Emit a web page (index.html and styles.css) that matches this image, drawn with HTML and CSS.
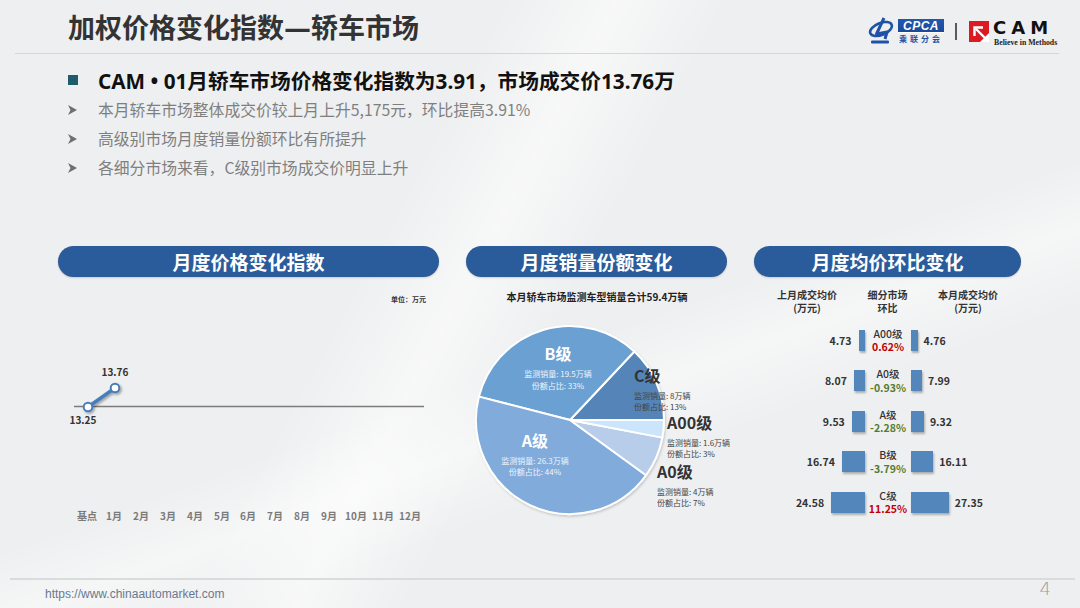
FILE: index.html
```html
<!DOCTYPE html>
<html lang="zh-CN">
<head>
<meta charset="utf-8">
<title>加权价格变化指数—轿车市场</title>
<link rel="stylesheet" href="styles.css">
</head>
<body>
<div class="slide">
  <header class="top">
    <h1 class="title">加权价格变化指数<span class="dash">—</span>轿车市场</h1>
    <div class="logos">
      <svg class="emblem" width="26" height="28" viewBox="0 0 26 28">
        <ellipse cx="13" cy="12" rx="11.5" ry="6" transform="rotate(-22 13 12)" fill="none" stroke="#1f52a6" stroke-width="2.6"/>
        <path d="M16 1 L8.5 17 L19 15 L17 22" fill="none" stroke="#1f52a6" stroke-width="3" stroke-linejoin="round"/>
        <rect x="3" y="23.5" width="18" height="3" rx="1" fill="#1f52a6"/>
      </svg>
      <div class="cpca">
        <div class="cpca-box">CPCA</div>
        <div class="cpca-cn">乘联分会</div>
      </div>
      <span class="sep"></span>
      <svg class="cammark" width="20" height="21" viewBox="0 0 20 21">
        <rect width="20" height="21" fill="#dc1a22"/>
        <path d="M18.5 19.5 L7 8" stroke="#fff" stroke-width="2.4"/>
        <path d="M5.5 15 L5.5 6.5 L14 6.5" fill="none" stroke="#fff" stroke-width="2.4"/>
        <path d="M20 12 L20 21 L11 21 Z" fill="#fff"/>
      </svg>
      <div class="cam">
        <div class="cam-name">CAM</div>
        <div class="cam-slogan">Believe in Methods</div>
      </div>
    </div>
  </header>

  <section class="points">
    <div class="lead"><span class="sq"></span><span>CAM • 01月轿车市场价格变化指数为3.91，市场成交价13.76万</span></div>
    <ul class="subs">
      <li><svg class="arrow" width="9" height="10" viewBox="0 0 9 10"><polygon points="0,0 9,5 0,10 2.5,5" fill="#6f6f6f"/></svg>本月轿车市场整体成交价较上月上升5,175元，环比提高3.91%</li>
      <li><svg class="arrow" width="9" height="10" viewBox="0 0 9 10"><polygon points="0,0 9,5 0,10 2.5,5" fill="#6f6f6f"/></svg>高级别市场月度销量份额环比有所提升</li>
      <li><svg class="arrow" width="9" height="10" viewBox="0 0 9 10"><polygon points="0,0 9,5 0,10 2.5,5" fill="#6f6f6f"/></svg>各细分市场来看，C级别市场成交价明显上升</li>
    </ul>
  </section>

  <section class="panels">
    <div class="panel p1">
      <div class="pill">月度价格变化指数</div>
      <svg class="chart" width="381" height="252" viewBox="0 0 381 252">
        <defs>
          <filter id="sh" x="-20%" y="-20%" width="150%" height="150%">
            <feDropShadow dx="1.5" dy="1.5" stdDeviation="1" flood-color="#000" flood-opacity="0.35"/>
          </filter>
        </defs>
        <text class="unit" x="368" y="25" text-anchor="end">单位：万元</text>
        <line x1="16" y1="129.5" x2="366" y2="129.5" stroke="#7b7b7b" stroke-width="1.3"/>
        <g filter="url(#sh)">
          <line x1="30" y1="130" x2="57" y2="111" stroke="#4a7dba" stroke-width="3.6"/>
          <circle cx="30" cy="130" r="4.3" fill="#fff" stroke="#4a7dba" stroke-width="2"/>
          <circle cx="57" cy="111" r="4.3" fill="#fff" stroke="#4a7dba" stroke-width="2"/>
        </g>
        <text class="pt" x="57" y="99" text-anchor="middle">13.76</text>
        <text class="pt" x="25" y="147" text-anchor="middle">13.25</text>
        <g class="axis" text-anchor="middle">
          <text x="29" y="243">基点</text>
          <text x="56" y="243">1月</text>
          <text x="83" y="243">2月</text>
          <text x="110" y="243">3月</text>
          <text x="137" y="243">4月</text>
          <text x="164" y="243">5月</text>
          <text x="190" y="243">6月</text>
          <text x="217" y="243">7月</text>
          <text x="244" y="243">8月</text>
          <text x="271" y="243">9月</text>
          <text x="298" y="243">10月</text>
          <text x="325" y="243">11月</text>
          <text x="352" y="243">12月</text>
        </g>
      </svg>
    </div>

    <div class="panel p2">
      <div class="pill">月度销量份额变化</div>
      <svg class="chart" width="261" height="252" viewBox="0 0 261 252">
        <defs>
          <filter id="psh" x="-10%" y="-10%" width="125%" height="125%">
            <feDropShadow dx="1" dy="1.5" stdDeviation="1.2" flood-color="#000" flood-opacity="0.18"/>
          </filter>
        </defs>
        <text class="pie-title" x="131" y="24" text-anchor="middle">本月轿车市场监测车型销量合计59.4万辆</text>
        <g stroke="#fff" stroke-width="2" stroke-linejoin="round" filter="url(#psh)">
          <path d="M104 143 L198 143 A94 94 0 0 0 168.34 74.47 Z" fill="#5585b8"/>
          <path d="M104 143 L168.34 74.47 A94 94 0 0 0 12.95 119.62 Z" fill="#6aa0d2"/>
          <path d="M104 143 L12.95 119.62 A94 94 0 0 0 180.05 198.25 Z" fill="#80abdb"/>
          <path d="M104 143 L180.05 198.25 A94 94 0 0 0 196.34 160.61 Z" fill="#b8cde9"/>
          <path d="M104 143 L196.34 160.61 A94 94 0 0 0 198 143 Z" fill="#cbe5fc"/>
        </g>
        <g class="lab-w" text-anchor="middle">
          <text class="big" x="92" y="83">B级</text>
          <text class="small" x="92" y="100">监测销量: 19.5万辆</text>
          <text class="small" x="92" y="112">份额占比: 33%</text>
          <text class="big" x="69" y="170">A级</text>
          <text class="small" x="69" y="187">监测销量: 26.3万辆</text>
          <text class="small" x="69" y="198">份额占比: 44%</text>
        </g>
        <g class="lab-d">
          <text class="big" x="168" y="105">C级</text>
          <text class="small" x="168" y="122">监测销量: 8万辆</text>
          <text class="small" x="168" y="133">份额占比: 13%</text>
          <text class="big" x="201" y="152">A00级</text>
          <text class="small" x="201" y="169">监测销量: 1.6万辆</text>
          <text class="small" x="201" y="180">份额占比: 3%</text>
          <text class="big" x="191" y="201">A0级</text>
          <text class="small" x="191" y="218">监测销量: 4万辆</text>
          <text class="small" x="191" y="229">份额占比: 7%</text>
        </g>
      </svg>
    </div>

    <div class="panel p3">
      <div class="pill">月度均价环比变化</div>
      <div class="cmp-head">
        <div>上月成交均价<br>(万元)</div>
        <div>细分市场<br>环比</div>
        <div>本月成交均价<br>(万元)</div>
      </div>
      <div class="cmp-rows">
        <div class="cmp-row">
          <div class="side left"><span class="val">4.73</span><span class="bar" style="width:6.5px"></span></div>
          <div class="mid"><div class="seg">A00级</div><div class="pct up">0.62%</div></div>
          <div class="side right"><span class="bar" style="width:6.6px"></span><span class="val">4.76</span></div>
        </div>
        <div class="cmp-row">
          <div class="side left"><span class="val">8.07</span><span class="bar" style="width:11.1px"></span></div>
          <div class="mid"><div class="seg">A0级</div><div class="pct down">-0.93%</div></div>
          <div class="side right"><span class="bar" style="width:11px"></span><span class="val">7.99</span></div>
        </div>
        <div class="cmp-row">
          <div class="side left"><span class="val">9.53</span><span class="bar" style="width:13.2px"></span></div>
          <div class="mid"><div class="seg">A级</div><div class="pct down">-2.28%</div></div>
          <div class="side right"><span class="bar" style="width:12.9px"></span><span class="val">9.32</span></div>
        </div>
        <div class="cmp-row">
          <div class="side left"><span class="val">16.74</span><span class="bar" style="width:23.1px"></span></div>
          <div class="mid"><div class="seg">B级</div><div class="pct down">-3.79%</div></div>
          <div class="side right"><span class="bar" style="width:22.2px"></span><span class="val">16.11</span></div>
        </div>
        <div class="cmp-row">
          <div class="side left"><span class="val">24.58</span><span class="bar" style="width:33.9px"></span></div>
          <div class="mid"><div class="seg">C级</div><div class="pct up">11.25%</div></div>
          <div class="side right"><span class="bar" style="width:37.7px"></span><span class="val">27.35</span></div>
        </div>
      </div>
    </div>
  </section>

  <footer class="foot">
    <span class="url">https://www.chinaautomarket.com</span>
    <span class="page">4</span>
  </footer>
</div>
</body>
</html>
```

FILE: styles.css
```css
* { box-sizing: border-box; margin: 0; padding: 0; }

body {
  margin: 0;
  width: 1080px;
  height: 608px;
  overflow: hidden;
  font-family: "Noto Sans CJK SC", "Noto Sans", sans-serif;
  color: #333;
}

.slide {
  width: 1080px;
  height: 608px;
  display: flex;
  flex-direction: column;
  background:
    linear-gradient(118deg, rgba(255,255,255,0) 36%, rgba(255,255,255,0.55) 44%, rgba(255,255,255,0) 52%),
    linear-gradient(160deg, rgba(255,255,255,0) 55%, rgba(255,255,255,0.45) 62%, rgba(255,255,255,0) 70%),
    #eeeff0;
}

/* header */
.top {
  height: 54px;
  margin: 0 21px 0 15px;
  padding: 3px 2px 0 53px;
  border-bottom: 1.5px solid #d5d6d8;
  display: flex;
  align-items: center;
  justify-content: space-between;
}

.title {
  font-size: 27px;
  font-weight: 700;
  color: #333;
  line-height: 36px;
}

.dash {
  font-family: "DejaVu Sans", sans-serif;
  font-weight: 700;
  font-size: 27px;
}

.logos {
  display: flex;
  align-items: center;
  padding-top: 6px;
}

.emblem { margin-right: 4px; }

.cpca {
  display: flex;
  flex-direction: column;
  align-items: flex-start;
  width: 46px;
}

.cpca-box {
  width: 46px;
  height: 14px;
  background: linear-gradient(#2158b0, #1a4a98);
  color: #fff;
  font-family: "Liberation Sans", Arial, sans-serif;
  font-style: italic;
  font-weight: 700;
  font-size: 12px;
  line-height: 14px;
  text-align: center;
  letter-spacing: 0.5px;
  border-bottom: 1px solid #fff;
}

.cpca-cn {
  font-size: 8px;
  line-height: 10px;
  color: #2154a6;
  letter-spacing: 3px;
  margin-top: 1px;
  padding-left: 1px;
  font-weight: 700;
}

.sep {
  width: 2px;
  height: 17px;
  background: #5a5a5a;
  margin: 0 12px 0 11px;
}

.cammark { margin-right: 4px; }

.cam {
  display: flex;
  flex-direction: column;
  align-items: flex-start;
  width: 64px;
  margin-top: 2px;
}

.cam-name {
  font-family: "DejaVu Sans", "Liberation Sans", sans-serif;
  font-weight: 700;
  font-size: 18px;
  line-height: 21px;
  letter-spacing: 5px;
  color: #111;
}

.cam-slogan {
  font-family: "Liberation Serif", serif;
  font-weight: 700;
  font-size: 7.8px;
  line-height: 9px;
  color: #222;
  padding-left: 1px;
  white-space: nowrap;
}

/* bullets */
.points {
  padding-left: 68px;
  margin-top: 12px;
}

.lead {
  display: flex;
  align-items: center;
  height: 28px;
  font-family: "Noto Sans", "Noto Sans CJK SC", sans-serif;
  font-size: 20.7px;
  font-weight: 700;
  color: #111;
}

.sq {
  width: 10px;
  height: 10px;
  background: #1f5c6b;
  margin-right: 20px;
  flex: none;
}

.subs {
  list-style: none;
  margin-top: 1px;
}

.subs li {
  display: flex;
  align-items: center;
  height: 29px;
  font-size: 15.8px;
  color: #7f7f7f;
}

.arrow {
  margin-right: 21px;
  flex: none;
}

/* panels */
.panels {
  display: flex;
  gap: 27px;
  padding-left: 58px;
  margin-top: 64px;
}

.panel {
  display: flex;
  flex-direction: column;
}

.p1 { width: 381px; }
.p2 { width: 261px; }
.p3 { width: 267px; }

.pill {
  height: 31px;
  border-radius: 16px;
  background: #2a5c9b;
  color: #fff;
  font-size: 19px;
  font-weight: 700;
  line-height: 31px;
  text-align: center;
  box-shadow: 0 1px 2px rgba(0,0,0,0.15);
}

.chart { overflow: visible; display: block; }

.unit { font-size: 7px; font-weight: 700; fill: #333; }
.pt { font-size: 10px; font-weight: 700; fill: #333; }
.axis text { font-size: 10px; font-weight: 700; fill: #7a7a7a; }

.pie-title { font-size: 10px; font-weight: 700; fill: #222; }
.lab-w text { fill: #fff; }
.lab-d text { fill: #333; }
.lab-w .small { fill: #eef4fb; }
.lab-d .small { fill: #444; }
.big { font-size: 16px; font-weight: 700; }
.small { font-size: 8px; }

/* comparison */
.cmp-head {
  display: grid;
  grid-template-columns: 106px 55px 106px;
  margin-top: 11px;
  font-size: 10px;
  font-weight: 700;
  line-height: 13px;
  color: #333;
  text-align: center;
}

.cmp-rows {
  margin-top: 6px;
  display: flex;
  flex-direction: column;
}

.cmp-row {
  display: flex;
  align-items: center;
  height: 40.5px;
}

.side {
  display: flex;
  align-items: center;
  gap: 7px;
}

.side.left {
  width: 111px;
  justify-content: flex-end;
}

.side.right {
  flex: 1;
  gap: 6px;
}

.bar {
  height: 21px;
  background: #5386bb;
  box-shadow: 1px 2px 2px rgba(0,0,0,0.28);
  flex: none;
}

.val {
  font-size: 10.5px;
  font-weight: 700;
  color: #333;
}

.mid {
  width: 46px;
  text-align: center;
  font-size: 10.5px;
  line-height: 13.5px;
}

.seg { color: #333; font-weight: 500; }
.pct { font-weight: 700; }
.pct.up { color: #c00000; }
.pct.down { color: #557b2d; }

/* footer */
.foot {
  margin: auto 5px 0 10px;
  height: 30px;
  border-top: 2px solid #dadbdc;
  display: flex;
  justify-content: space-between;
  align-items: flex-start;
  padding: 0 24px 0 35px;
}

.url {
  font-family: "Liberation Sans", Arial, sans-serif;
  font-size: 12px;
  color: #6a7890;
  margin-top: 7px;
  line-height: 14px;
}

.page {
  font-family: "DejaVu Sans", sans-serif;
  font-weight: 300;
  font-size: 18px;
  line-height: 20px;
  color: #9a9a9a;
  margin-top: -1px;
}
```
